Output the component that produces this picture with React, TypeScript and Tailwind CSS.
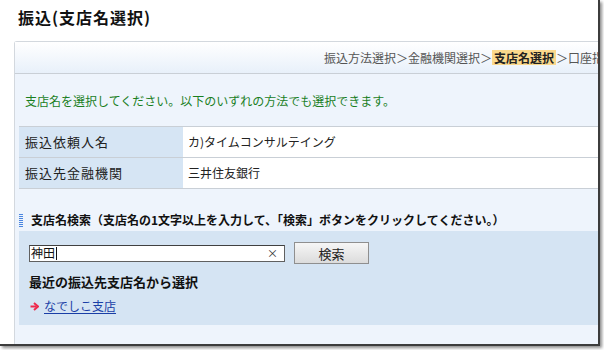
const jp = { fontFamily: '"Noto Sans CJK JP", "Noto Sans", sans-serif' };

const crumbs = ['振込方法選択', '金融機関選択', '支店名選択', '口座指定'];

function Breadcrumb() {
  return (
    <div className="h-[32px] flex items-center pl-[309px] whitespace-nowrap text-[12px] text-[#555] bg-gradient-to-b from-white to-[#e8f0fa] border-b border-[#c9cfd6]">
      {crumbs.map((c, i) => (
        <span key={c} className="flex items-center">
          {i > 0 && <span>＞</span>}
          {c === '支店名選択' ? (
            <span className="bg-[#fbd98c] text-[#222] font-bold px-[2px] leading-[15px]">{c}</span>
          ) : (
            <span>{c}</span>
          )}
        </span>
      ))}
    </div>
  );
}

function InfoRow({ label, value }: { label: string; value: string }) {
  return (
    <div className="flex h-[31px] border-b border-[#c9cfd6]">
      <div className="w-[164px] bg-[#d6e5f4] flex items-center pl-[6px] text-[13px] tracking-[1px] text-[#222]">
        {label}
      </div>
      <div className="flex-1 bg-white flex items-center pl-[5px] text-[12px] text-[#222]">{value}</div>
    </div>
  );
}

function BlueBar() {
  return (
    <span className="w-[4px] h-[13px] flex flex-col justify-between">
      {[0, 1, 2, 3, 4, 5, 6].map((i) => (
        <span key={i} className="h-[1px] w-full bg-[#4a86e0]" />
      ))}
    </span>
  );
}

function RedArrow() {
  return (
    <svg width="9" height="9" viewBox="0 0 9 9">
      <path d="M0.5 4.5 H6.5" stroke="#ee2a4c" strokeWidth="2" />
      <path d="M4 1 L8 4.5 L4 8" fill="none" stroke="#ee2a4c" strokeWidth="2" />
    </svg>
  );
}

export default function App() {
  return (
    <div className="w-[604px] h-[350px] bg-white overflow-hidden" style={jp}>
      <div className="w-[600px] h-[346px] bg-white overflow-hidden border-r-2 border-b-2 border-[#3c3c3c] shadow-[2px_2px_3px_rgba(0,0,0,0.45)]">
        <div className="h-[41px] pl-[18px] pt-[7px] text-[16px] leading-[20px] font-bold tracking-[1px] text-[#111]">
          振込(支店名選択)
        </div>

        <div className="ml-[14px] w-[700px] h-[400px] bg-[#eef4fc] border-l border-t border-[#d3d8de] rounded-tl-[3px]">
          <Breadcrumb />

          <div className="pl-[10px] pt-[18px] text-[12px] leading-[18px] text-[#1a7f1f]">
            支店名を選択してください。以下のいずれの方法でも選択できます。
          </div>

          <div className="ml-[4px] mt-[16px] border-t border-[#c9cfd6]">
            <InfoRow label="振込依頼人名" value="カ)タイムコンサルテイング" />
            <InfoRow label="振込先金融機関" value="三井住友銀行" />
          </div>

          <div className="ml-[4px] mt-[23px] flex items-center gap-[8px] h-[16px]">
            <BlueBar />
            <span className="text-[12px] font-bold text-[#111] whitespace-nowrap">
              支店名検索（支店名の1文字以上を入力して、「検索」ボタンをクリックしてください。）
            </span>
          </div>

          <div className="ml-[4px] mt-[3px] bg-[#d5e4f3] pl-[10px] pt-[11px] pb-[11px]">
            <div className="flex items-center gap-[9px] h-[22px]">
              <div className="w-[256px] h-[17px] bg-white border border-[#606060] border-t-[#404040] flex items-center pl-[1px] pr-[6px] text-[12px] text-[#111]">
                <span>神田</span>
                <span className="w-[1px] h-[13px] bg-[#111] ml-[1px]" />
                <span className="flex-1" />
                <span className="text-[11px] text-[#333] leading-none">×</span>
              </div>
              <button className="w-[75px] h-[22px] bg-gradient-to-b from-[#f6f6f6] to-[#dcdcdc] border border-[#8f8f8f] text-[13px] text-[#222] leading-none">
                検索
              </button>
            </div>

            <div className="mt-[10px] text-[13px] leading-[16px] font-bold text-[#111]">
              最近の振込先支店名から選択
            </div>

            <div className="mt-[8px] h-[16px] flex items-center gap-[5px] pl-[1px]">
              <RedArrow />
              <a href="#" className="text-[12px] text-[#1a3ea6] underline underline-offset-2">
                なでしこ支店
              </a>
            </div>
          </div>
        </div>
      </div>
    </div>
  );
}
